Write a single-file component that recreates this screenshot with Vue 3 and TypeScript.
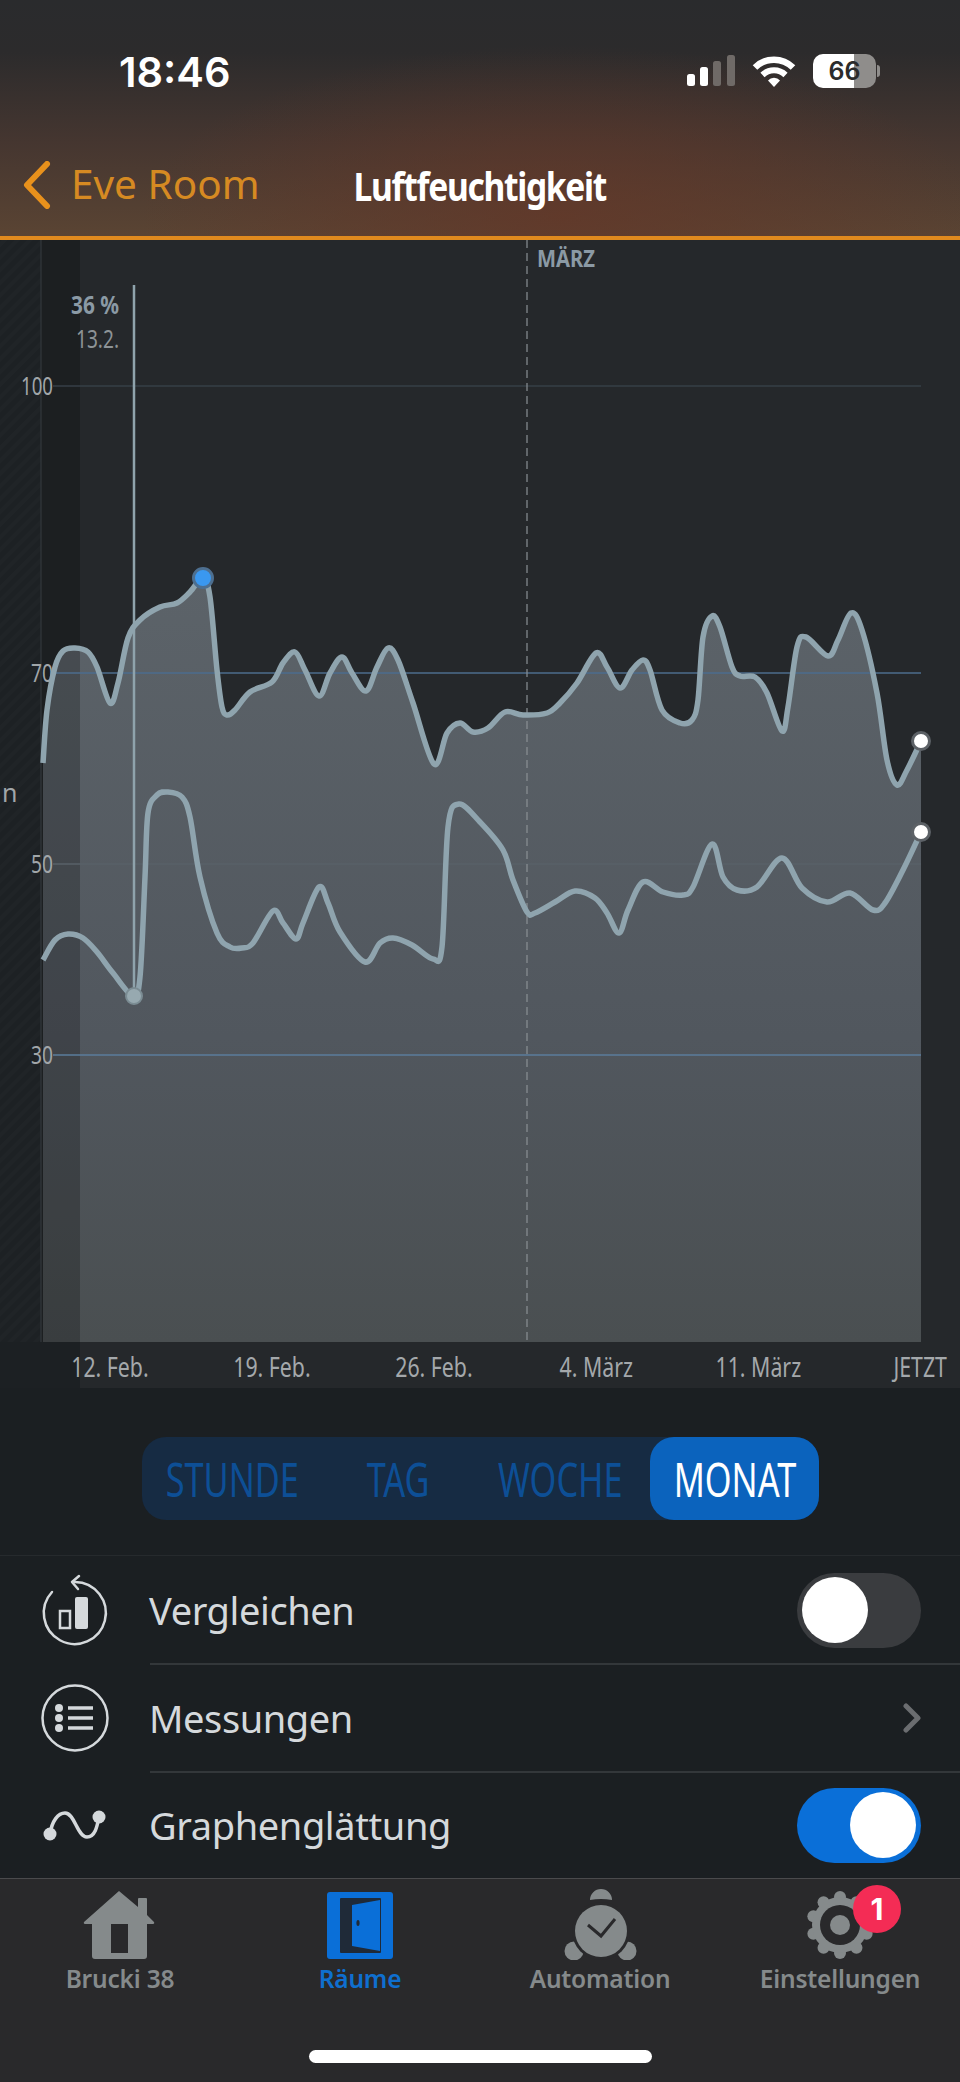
<script setup lang="ts">
type Pt = [number, number];

const topPts: Pt[] = [
  [43,763],[47,710],[55,667],[63,651],[75,648],[88,652],[97,667],[110,703],[118,683],[128,638],[140,620],[160,607],[177,603],[190,592],[203,578],[210,597],[217,670],[222,707],[227,715],[235,710],[250,692],[272,682],[283,663],[295,652],[305,670],[319,696],[330,673],[342,657],[352,673],[366,691],[377,667],[388,648],[398,660],[413,703],[434,764],[447,733],[460,723],[473,732],[488,728],[505,712],[523,715],[547,713],[560,703],[577,683],[596,653],[607,667],[620,688],[632,670],[643,660],[650,670],[662,710],[680,723],[692,720],[698,700],[703,637],[712,616],[720,627],[732,667],[740,676],[755,677],[767,693],[782,731],[788,707],[797,647],[806,637],[828,656],[838,640],[851,613],[862,630],[877,693],[887,760],[897,785],[907,770],[921,741],
];
const lowPts: Pt[] = [
  [43,960],[55,940],[68,934],[83,938],[97,952],[113,973],[133,996],[140,977],[145,877],[148,813],[157,795],[168,792],[182,797],[190,817],[200,877],[217,933],[230,947],[242,948],[253,943],[273,911],[283,923],[296,939],[303,923],[319,887],[328,903],[340,932],[365,962],[380,943],[393,938],[412,945],[433,959],[442,947],[448,827],[459,804],[480,822],[503,850],[513,880],[527,912],[535,913],[555,902],[575,891],[595,898],[607,913],[619,933],[628,910],[643,882],[663,892],[683,895],[693,887],[712,844],[723,877],[737,890],[757,887],[782,858],[802,888],[827,902],[850,893],[873,910],[885,903],[903,870],[921,832],
];

// catmull-rom through the measured points
function smooth(p: Pt[]): string {
  let d = `M${p[0][0]} ${p[0][1]}`;
  for (let i = 0; i < p.length - 1; i++) {
    const a = p[Math.max(i - 1, 0)];
    const b = p[i];
    const c = p[i + 1];
    const e = p[Math.min(i + 2, p.length - 1)];
    const c1x = b[0] + (c[0] - a[0]) / 6;
    const c1y = b[1] + (c[1] - a[1]) / 6;
    const c2x = c[0] - (e[0] - b[0]) / 6;
    const c2y = c[1] - (e[1] - b[1]) / 6;
    d += `C${c1x.toFixed(1)} ${c1y.toFixed(1)} ${c2x.toFixed(1)} ${c2y.toFixed(1)} ${c[0]} ${c[1]}`;
  }
  return d;
}

const topLine = smooth(topPts);
const lowLine = smooth(lowPts);
const area = `${topLine}V1342H43Z`;

const xLabels = ["12. Feb.", "19. Feb.", "26. Feb.", "4. März", "11. März", "JETZT"];
const ranges = [
  { name: "STUNDE", w: 180 },
  { name: "TAG", w: 153 },
  { name: "WOCHE", w: 170 },
  { name: "MONAT", w: 169, active: true },
];
const gearTeeth = Array.from({ length: 10 }, (_, i) => {
  const a = (i * Math.PI) / 5 - Math.PI / 2;
  return { x: 40 + 28 * Math.cos(a), y: 37 + 28 * Math.sin(a) };
});
</script>

<template>
  <div class="screen">
    <header class="top">
      <div class="status">
        <span class="time">18:46</span>
        <div class="status-icons">
          <svg width="48" height="32" viewBox="0 0 48 32">
            <rect x="0" y="19" width="8" height="12" rx="2.5" fill="#fff" />
            <rect x="13" y="12" width="8" height="19" rx="2.5" fill="#fff" />
            <rect x="26" y="6" width="8" height="25" rx="2.5" fill="#6f6a67" />
            <rect x="40" y="0" width="8" height="31" rx="2.5" fill="#6f6a67" />
          </svg>
          <svg width="44" height="34" viewBox="0 0 44 34">
            <path d="M3 13.5a27 27 0 0 1 38 0" fill="none" stroke="#fff" stroke-width="6.5" />
            <path d="M10.5 21a16.5 16.5 0 0 1 23 0" fill="none" stroke="#fff" stroke-width="6" />
            <path d="M16 26.5a8 8 0 0 1 12 0L22 33Z" fill="#fff" />
          </svg>
          <div class="battery">
            <span class="battery-num">66</span>
          </div>
        </div>
      </div>
      <nav class="nav">
        <div class="back">
          <svg width="30" height="48" viewBox="0 0 30 48">
            <path d="M25 3 5 24l20 21" fill="none" stroke="#e8911c" stroke-width="6" stroke-linecap="round" stroke-linejoin="round" />
          </svg>
          <span>Eve Room</span>
        </div>
        <h1 class="title">Luftfeuchtigkeit</h1>
        <div></div>
      </nav>
    </header>

    <section class="chart">
      <svg class="plot" width="960" height="1102" viewBox="0 240 960 1102">
        <defs>
          <linearGradient id="fill" gradientUnits="userSpaceOnUse" x1="0" y1="580" x2="0" y2="1342">
            <stop offset="0" stop-color="#5c6369" />
            <stop offset="0.6" stop-color="#51575e" />
            <stop offset="1" stop-color="#4a4f51" />
          </linearGradient>
          <pattern id="hatch" width="9" height="9" patternUnits="userSpaceOnUse" patternTransform="rotate(45)">
            <rect width="9" height="9" fill="#1d2124" />
            <rect width="4" height="9" fill="#202427" />
          </pattern>
        </defs>
        <rect x="0" y="240" width="41" height="1102" fill="url(#hatch)" />
        <path :d="area" fill="url(#fill)" />
        <rect x="41" y="240" width="39" height="1102" fill="#000" opacity="0.22" />
        <line x1="41" y1="240" x2="41" y2="1342" stroke="#33383c" stroke-width="1.2" />

        <line x1="53" y1="386" x2="921" y2="386" stroke="#363f47" stroke-width="1.5" />
        <line x1="53" y1="673" x2="921" y2="673" stroke="#4c6c8e" stroke-width="1.5" />
        <line x1="53" y1="864" x2="921" y2="864" stroke="#596068" stroke-width="1.5" />
        <line x1="53" y1="1055" x2="921" y2="1055" stroke="#5b7c9c" stroke-width="1.5" />
        <line x1="527" y1="240" x2="527" y2="1342" stroke="#8a9094" stroke-width="1.2" stroke-dasharray="8 5" />

        <text class="tick" x="21" y="395" textLength="32" lengthAdjust="spacingAndGlyphs">100</text>
        <text class="tick" x="31" y="682" textLength="22" lengthAdjust="spacingAndGlyphs">70</text>
        <text class="tick" x="31" y="873" textLength="22" lengthAdjust="spacingAndGlyphs">50</text>
        <text class="tick" x="31" y="1064" textLength="22" lengthAdjust="spacingAndGlyphs">30</text>
        <text class="tick" x="2" y="802">n</text>
        <text class="month" x="537" y="267" textLength="58" lengthAdjust="spacingAndGlyphs">MÄRZ</text>

        <line x1="134" y1="285" x2="134" y2="996" stroke="#8fa3ac" stroke-width="2.5" />
        <text class="cursor-val" x="71" y="314" textLength="48" lengthAdjust="spacingAndGlyphs">36 %</text>
        <text class="cursor-date" x="76" y="348" textLength="43" lengthAdjust="spacingAndGlyphs">13.2.</text>

        <path :d="topLine" fill="none" stroke="#8fa4ae" stroke-width="5.5" stroke-linejoin="round" />
        <path :d="lowLine" fill="none" stroke="#8fa4ae" stroke-width="5.5" stroke-linejoin="round" />

        <circle cx="203" cy="578" r="9.5" fill="#3a98f0" stroke="#4d6f90" stroke-width="3" />
        <circle cx="134" cy="996" r="8" fill="#97a9b0" stroke="#7b8c93" stroke-width="2" />
        <circle cx="921" cy="741" r="8.5" fill="#fff" stroke="#5c6166" stroke-width="3" />
        <circle cx="921" cy="832" r="8.5" fill="#fff" stroke="#5c6166" stroke-width="3" />
      </svg>
    </section>

    <div class="x-axis">
      <span v-for="label in xLabels" :key="label" class="x-cell">
        <span class="squeeze">{{ label }}</span>
      </span>
    </div>

    <div class="range-wrap">
      <div class="range">
        <div
          v-for="r in ranges"
          :key="r.name"
          class="range-item"
          :class="{ active: r.active }"
          :style="{ width: r.w + 'px' }"
        >
          <span class="squeeze-lg">{{ r.name }}</span>
        </div>
      </div>
    </div>

    <div class="list">
      <div class="row">
        <svg class="row-icon" width="80" height="80" viewBox="0 0 80 80">
          <path d="M17 22A31 31 0 1 0 40 12" fill="none" stroke="#d5d9dc" stroke-width="2.5" stroke-linecap="round" />
          <path d="M44 6 37 12l6 7" fill="none" stroke="#d5d9dc" stroke-width="2.5" stroke-linecap="round" stroke-linejoin="round" />
          <rect x="25" y="41" width="10" height="17" fill="none" stroke="#d5d9dc" stroke-width="2.5" />
          <rect x="40" y="27" width="13" height="32" rx="2" fill="#d5d9dc" />
        </svg>
        <span class="row-label">Vergleichen</span>
        <div class="toggle"><span class="knob"></span></div>
      </div>
      <div class="row">
        <svg class="row-icon" width="80" height="80" viewBox="0 0 80 80">
          <circle cx="40" cy="40" r="32.5" fill="none" stroke="#d5d9dc" stroke-width="2.5" />
          <circle cx="24" cy="30" r="4" fill="#d5d9dc" />
          <circle cx="24" cy="40" r="4" fill="#d5d9dc" />
          <circle cx="24" cy="50" r="4" fill="#d5d9dc" />
          <path d="M33 30h25M33 40h25M33 50h25" stroke="#d5d9dc" stroke-width="3.5" />
        </svg>
        <span class="row-label">Messungen</span>
        <svg class="chev" width="18" height="30" viewBox="0 0 18 30">
          <path d="M3 3l12 12L3 27" fill="none" stroke="#6b6d70" stroke-width="5" stroke-linecap="round" stroke-linejoin="round" />
        </svg>
      </div>
      <div class="row">
        <svg class="row-icon" width="80" height="80" viewBox="0 0 80 80">
          <path d="M15 49C17 36 23 28 30 28C40 28 42 52 52 52C60 52 62 42 64 32" fill="none" stroke="#d5d9dc" stroke-width="3.5" stroke-linecap="round" />
          <circle cx="15" cy="49" r="6.5" fill="#d5d9dc" />
          <circle cx="64" cy="32" r="6.5" fill="#d5d9dc" />
        </svg>
        <span class="row-label">Graphenglättung</span>
        <div class="toggle on"><span class="knob"></span></div>
      </div>
    </div>

    <footer class="tabs">
      <div class="tab">
        <svg width="80" height="72" viewBox="0 0 80 72">
          <path fill-rule="evenodd" fill="#858a8b" d="M39 3 58 19V11Q58 10 59 10H66Q67 10 67 11V27L74 34Q75 36 72 36H67V68Q67 71 64 71H15Q12 71 12 68V36H6Q3 36 4 34ZM31 36V65H48V36Z" />
        </svg>
        <span class="tab-label">Brucki 38</span>
      </div>
      <div class="tab current">
        <svg width="80" height="72" viewBox="0 0 80 72">
          <rect x="7" y="4" width="66" height="67" rx="3" fill="#0a6fd8" />
          <rect x="20" y="10" width="41" height="55" rx="1" fill="#1f2a38" />
          <path d="M32 17 60 12V63L32 58Z" fill="#0a6fd8" />
          <ellipse cx="38" cy="35" rx="1.6" ry="3" fill="#1f2a38" />
        </svg>
        <span class="tab-label">Räume</span>
      </div>
      <div class="tab">
        <svg width="80" height="72" viewBox="0 0 80 72">
          <path d="M30 12A11 11 0 0 1 52 12Q41 10 30 12Z" fill="#858a8b" />
          <circle cx="14" cy="63" r="9.5" fill="#858a8b" />
          <circle cx="67" cy="63" r="9.5" fill="#858a8b" />
          <circle cx="41" cy="43" r="29" fill="#29292b" />
          <circle cx="41" cy="43" r="26" fill="#858a8b" />
          <path d="M28 37 41 48 55 31" fill="none" stroke="#29292b" stroke-width="3" />
        </svg>
        <span class="tab-label">Automation</span>
      </div>
      <div class="tab">
        <svg width="80" height="72" viewBox="0 0 80 72">
          <circle v-for="(t, i) in gearTeeth" :key="i" :cx="t.x" :cy="t.y" r="6" fill="#858a8b" />
          <circle cx="40" cy="37" r="28" fill="#858a8b" />
          <circle cx="40" cy="37" r="20" fill="#29292b" />
          <circle cx="40" cy="37" r="10" fill="#858a8b" />
        </svg>
        <span class="tab-label">Einstellungen</span>
        <span class="badge">1</span>
      </div>
      <div class="home-bar"></div>
    </footer>
  </div>
</template>

<style scoped>
.screen {
  position: relative;
  width: 960px;
  height: 2082px;
  overflow: hidden;
  display: flex;
  flex-direction: column;
  background: #1b1f22;
  font-family: "Noto Sans", "Liberation Sans", sans-serif;
}
.top {
  height: 240px;
  box-sizing: border-box;
  border-bottom: 4px solid #e08a1e;
  background:
    radial-gradient(ellipse 420px 170px at 560px 215px, rgba(100, 55, 40, 0.75), rgba(100, 55, 40, 0) 100%),
    linear-gradient(180deg, #2a2b2d 0%, #2c2b2c 22%, #453630 60%, #5a4433 100%);
  display: flex;
  flex-direction: column;
}
.status {
  height: 150px;
  box-sizing: border-box;
  padding: 54px 84px 0 119px;
  display: flex;
  justify-content: space-between;
  align-items: flex-start;
}
.time {
  font-family: Inter, "Noto Sans", sans-serif;
  font-size: 41.5px;
  line-height: 36px;
  font-weight: 600;
  color: #fff;
}
.status-icons {
  display: flex;
  align-items: center;
  gap: 17px;
}
.battery {
  position: relative;
  width: 63px;
  height: 34px;
  border-radius: 10px;
  background: linear-gradient(90deg, #fff 0, #fff 41px, #8f8d8b 41px);
  display: flex;
  align-items: center;
  justify-content: center;
}
.battery::after {
  content: "";
  position: absolute;
  right: -4px;
  top: 11px;
  width: 3px;
  height: 12px;
  border-radius: 0 3px 3px 0;
  background: #8f8d8b;
}
.battery-num {
  font-family: Inter, sans-serif;
  font-size: 25px;
  font-weight: 600;
  color: #2b2b2b;
}
.nav {
  display: grid;
  grid-template-columns: 1fr auto 1fr;
  align-items: center;
  height: 70px;
}
.back {
  display: flex;
  align-items: center;
  gap: 19px;
  padding-left: 22px;
  color: #d68a22;
  font-size: 40.5px;
  line-height: 48px;
  white-space: nowrap;
}
.back span {
  position: relative;
  top: -1px;
}
.title {
  margin: 0;
  font-size: 39px;
  font-weight: 700;
  color: #fff;
  letter-spacing: -1.5px;
  white-space: nowrap;
  transform: scaleX(0.86);
}
.chart {
  height: 1102px;
  background: #25282b;
  flex-shrink: 0;
}
.plot {
  display: block;
}
.tick {
  font-size: 25px;
  fill: #a1a6a9;
}
.month {
  font-size: 24px;
  font-weight: 700;
  fill: #8b9aa5;
}
.cursor-val {
  font-size: 25px;
  font-weight: 700;
  fill: #8b9aa5;
}
.cursor-date {
  font-size: 26px;
  fill: #8d9396;
}
.x-axis {
  height: 46px;
  flex-shrink: 0;
  display: flex;
  padding-left: 29px;
  background: linear-gradient(90deg, #1c2023 0, #1c2023 80px, #25282b 80px);
}
.x-cell {
  flex: 0 0 162px;
  display: flex;
  justify-content: center;
  align-items: center;
  padding-top: 2px;
  font-size: 28px;
  color: #a4a8ab;
  white-space: nowrap;
}
.squeeze {
  display: inline-block;
  transform: scaleX(0.76);
}
.squeeze-lg {
  display: inline-block;
  transform: scaleX(0.73);
}
.range-wrap {
  height: 167px;
  flex-shrink: 0;
  box-sizing: border-box;
  padding: 49px 0 0 142px;
}
.range {
  display: flex;
  width: 677px;
  height: 83px;
  border-radius: 24px;
  background: #162b43;
}
.range-item {
  display: flex;
  align-items: center;
  justify-content: center;
  font-size: 47px;
  color: #0d4f96;
  border-radius: 24px;
}
.range-item.active {
  margin-left: auto;
  background: #0b63bd;
  color: #fff;
}
.list {
  border-top: 1px solid #262a2d;
  flex-shrink: 0;
}
.row {
  height: 108px;
  box-sizing: border-box;
  display: flex;
  align-items: center;
  padding-right: 39px;
  position: relative;
}
.row:last-child {
  height: 106px;
}
.row + .row::before {
  content: "";
  position: absolute;
  left: 150px;
  right: 0;
  top: -1px;
  height: 1.5px;
  background: #33373a;
}
.row-icon {
  margin-left: 35px;
  margin-right: 34px;
  flex-shrink: 0;
}
.row-label {
  flex: 1;
  font-size: 38px;
  color: #d5d9dc;
  letter-spacing: -0.4px;
}
.toggle {
  width: 124px;
  height: 75px;
  border-radius: 38px;
  background: #3a3c3f;
  display: flex;
  align-items: center;
  padding: 0 5px;
  box-sizing: border-box;
}
.toggle.on {
  background: #0a6fd8;
  justify-content: flex-end;
}
.knob {
  width: 66px;
  height: 66px;
  border-radius: 50%;
  background: #fff;
}
.tabs {
  position: relative;
  flex: 1;
  display: grid;
  grid-template-columns: repeat(4, 240px);
  align-content: start;
  box-sizing: border-box;
  padding-top: 9px;
  border-top: 1.5px solid #4a4a4c;
  background: #29292b;
}
.tab {
  position: relative;
  display: flex;
  flex-direction: column;
  align-items: center;
}
.tab-label {
  margin-top: 2px;
  font-size: 24.5px;
  line-height: 34px;
  font-weight: 600;
  letter-spacing: -0.2px;
  color: #858a8b;
}
.tab.current .tab-label {
  color: #0f6fcf;
}
.badge {
  position: absolute;
  left: 133px;
  top: -3px;
  width: 48px;
  height: 48px;
  border-radius: 50%;
  background: #f42c55;
  color: #fff;
  font-family: Inter, sans-serif;
  font-size: 30px;
  font-weight: 700;
  display: flex;
  align-items: center;
  justify-content: center;
}
.home-bar {
  position: absolute;
  left: 309px;
  top: 171px;
  width: 343px;
  height: 13px;
  border-radius: 7px;
  background: #fff;
}
</style>

<style>
html,
body {
  background: #1b1f22;
}
</style>
